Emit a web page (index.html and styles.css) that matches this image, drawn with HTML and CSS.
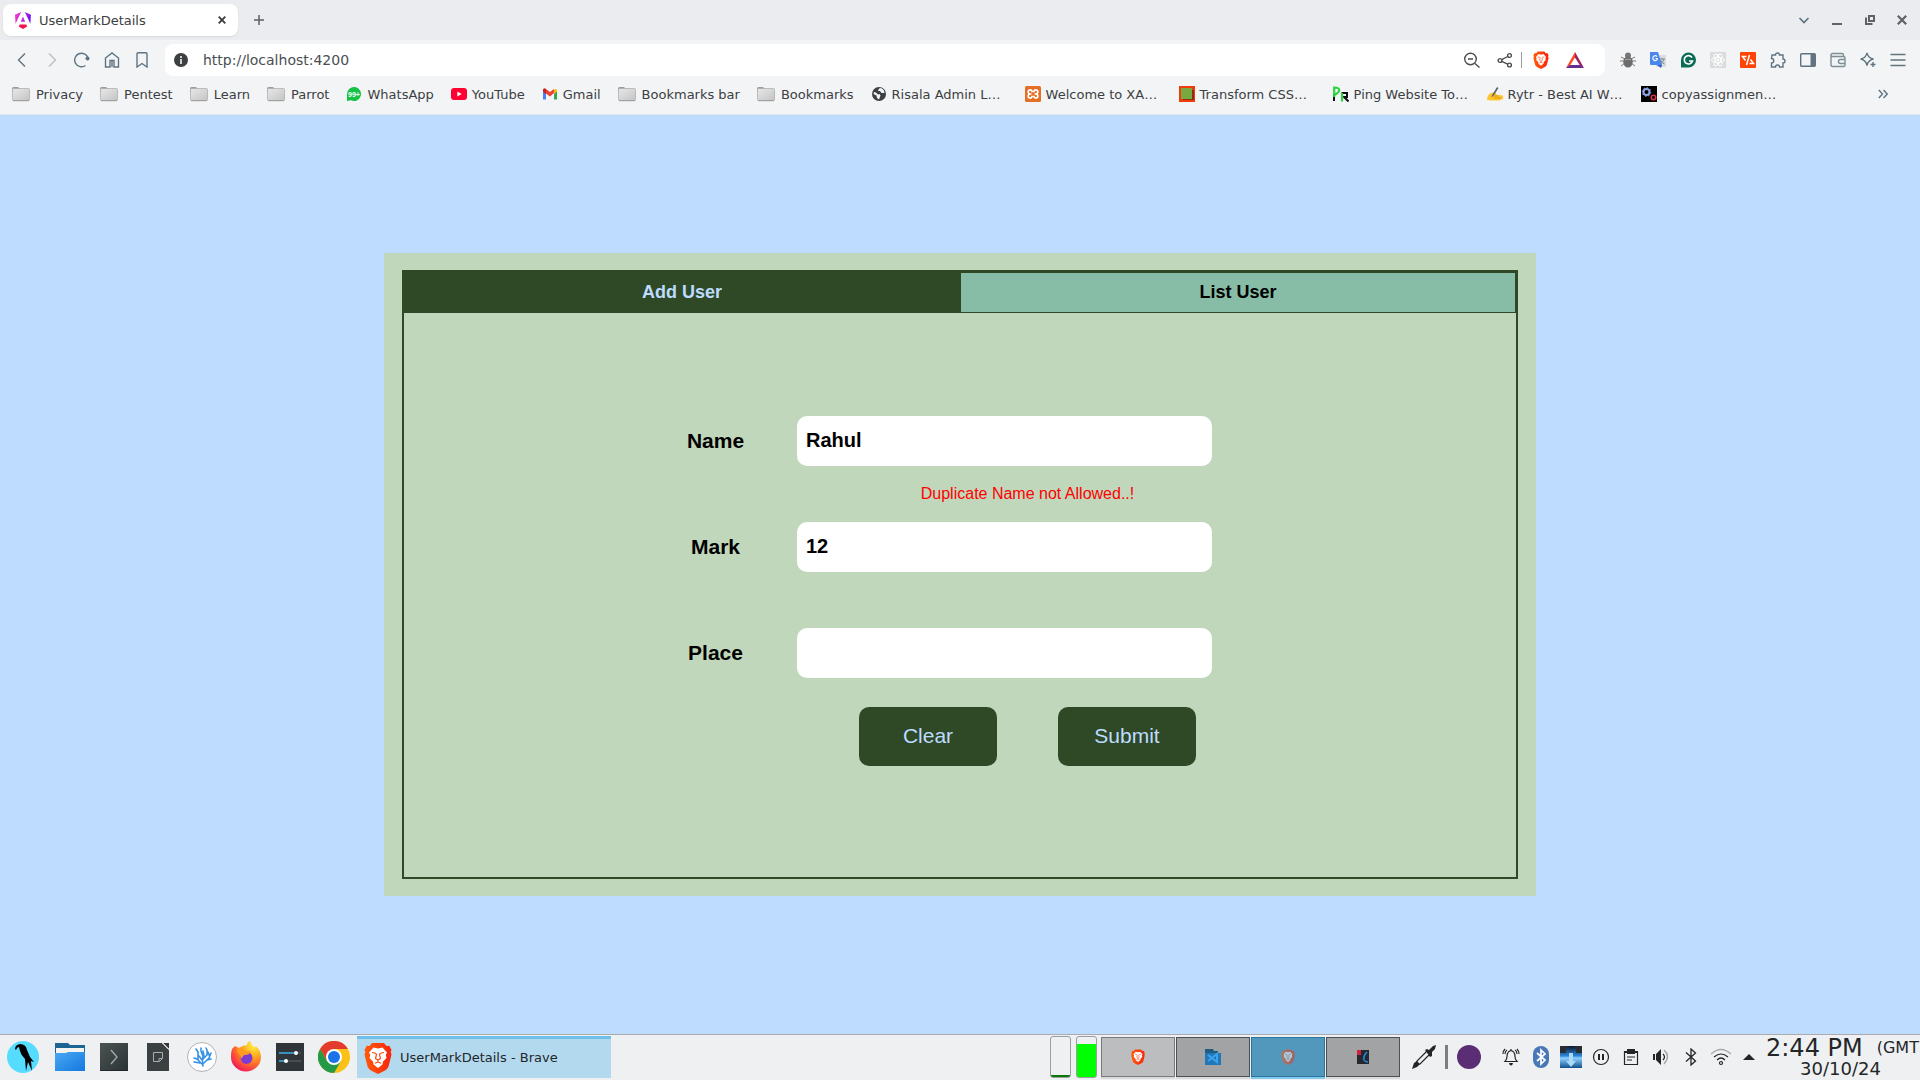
FILE: index.html
```html
<!DOCTYPE html>
<html lang="en">
<head>
<meta charset="utf-8">
<meta name="viewport" content="width=device-width, initial-scale=1">
<title>UserMarkDetails</title>
<link rel="stylesheet" href="styles.css">
</head>
<body>
<svg class="defs" aria-hidden="true">
  <defs>
    <linearGradient id="g-folder" x1="0" y1="0" x2="1" y2="1"><stop offset="0" stop-color="#e8e8e8"/><stop offset="1" stop-color="#c4c4c4"/></linearGradient>
    <linearGradient id="g-angular" x1="0" y1="0.2" x2="1" y2="0.4"><stop offset="0" stop-color="#f637c8"/><stop offset=".55" stop-color="#c822e8"/><stop offset="1" stop-color="#6c14f4"/></linearGradient>
    <linearGradient id="g-brave" x1="0" y1="0" x2="1" y2="0"><stop offset="0" stop-color="#ff5a0a"/><stop offset="1" stop-color="#f9240c"/></linearGradient>
    <linearGradient id="g-blue" x1="0" y1="0" x2="1" y2="1"><stop offset="0" stop-color="#4aa8f2"/><stop offset="1" stop-color="#1478e0"/></linearGradient>
    <linearGradient id="g-dark" x1="0" y1="0" x2="1" y2="1"><stop offset="0" stop-color="#4a5450"/><stop offset="1" stop-color="#2b3236"/></linearGradient>
    <radialGradient id="g-fox" cx=".75" cy=".15" r=".95"><stop offset="0" stop-color="#fff04a"/><stop offset=".35" stop-color="#ffb020"/><stop offset=".65" stop-color="#ff6a2c"/><stop offset="1" stop-color="#f0145e"/></radialGradient>
    <linearGradient id="g-sea" x1="0" y1="0" x2="0" y2="1"><stop offset="0" stop-color="#10182c"/><stop offset=".45" stop-color="#2a86dc"/><stop offset=".55" stop-color="#8fd0ff"/><stop offset="1" stop-color="#10508c"/></linearGradient>
    <symbol id="folder" viewBox="0 0 18 16"><path d="M0 6V2.500Q0 1 1.500 1H6l1.500 1.500V6z" fill="#9c9c9c"/><rect x=".5" y="2.500" width="17" height="12" rx="1" fill="url(#g-folder)" stroke="#a9a9a9" stroke-width=".7"/><path d="M1 14.700h16" stroke="#9a9a9a"/></symbol>
    <symbol id="brave" viewBox="0 0 28 32"><path d="M8 1h12l2.500 3 2.800-.3L27.500 8l-.8 2 .8 2.500-3 12Q23.500 27 21 28.500L14 32l-7-3.500Q4.500 27 3.500 24.500l-3-12L1.300 10 .5 8l2.200-4.300L5.500 4z" fill="url(#g-brave)"/><path d="M9.500 5.500 14 6.500l4.500-1 4.500 5-1.200 2.500.7 3-3.500 3.500-.5 3L14 26l-4.500-3.500-.5-3L5.500 16l.7-3L5 10.500z" fill="#fff"/><path d="M8 10.500l3.500.7 1 1.300-1 4 2.500 1.500 2.500-1.500-1-4 1-1.300 3.500-.7M14 18.500v1.500M11 21.300l3-1.300 3 1.300" fill="none" stroke="#fb4a14" stroke-width="1.200"/></symbol>
    <symbol id="bluetooth" viewBox="0 0 12 18"><path d="M1 4.500 10.500 13 6 17V1l4.500 4L1 13.500" fill="none" stroke="currentColor" stroke-width="1.300"/></symbol>
  </defs>
</svg>

<header class="browser">
  <div class="tabstrip">
    <div class="browser-tab">
      <svg width="16" height="17" viewBox="0 0 223 236" aria-hidden="true"><path fill="url(#g-angular)" d="m222 39-8 126L137 0zM8 165 0 39 85 0zM111 63l30 73H81z"/><path fill="#f4114e" d="m169 202-58 33-58-33 12-29h92z"/></svg>
      <span class="tab-title">UserMarkDetails</span>
      <button class="bare" aria-label="Close tab"><svg width="8" height="8" viewBox="0 0 8 8"><path d="M.7.7l6.600 6.600M7.300.7.700 7.300" stroke="#3c4043" stroke-width="1.900"/></svg></button>
    </div>
    <button class="bare new-tab" aria-label="New tab"><svg width="10" height="10" viewBox="0 0 10 10"><path d="M5 0v10M0 5h10" stroke="#5c6064" stroke-width="1.500"/></svg></button>
    <div class="window-buttons">
      <button class="bare" aria-label="Search tabs"><svg width="12" height="12" viewBox="0 0 12 12"><path d="m1.500 4 4.500 4.500L10.500 4" fill="none" stroke="#5f7480" stroke-width="1.700"/></svg></button>
      <button class="bare" aria-label="Minimize"><svg width="10" height="10" viewBox="0 0 10 10"><path d="M0 9h10" stroke="#5f6368" stroke-width="2"/></svg></button>
      <button class="bare" aria-label="Restore"><svg width="10" height="10" viewBox="0 0 10 10"><path d="M4 1h5v5H4zM1 2.500V9h6.500" fill="none" stroke="#5f6368" stroke-width="2"/></svg></button>
      <button class="bare" aria-label="Close"><svg width="10" height="10" viewBox="0 0 10 10"><path d="m.8.8 8.400 8.400M9.200.8.800 9.200" stroke="#5f6368" stroke-width="2.200"/></svg></button>
    </div>
  </div>

  <div class="toolbar">
    <nav class="tools" aria-label="Navigation">
      <button class="bare" aria-label="Back"><svg width="16" height="16" viewBox="0 0 16 16"><path d="M11 1.500 4.500 8l6.500 6.500" class="line"/></svg></button>
      <button class="bare faded" aria-label="Forward"><svg width="16" height="16" viewBox="0 0 16 16"><path d="M5 1.500 11.500 8 5 14.500" class="line"/></svg></button>
      <button class="bare" aria-label="Reload"><svg width="16" height="16" viewBox="0 0 16 16"><path d="M11.500 13.500A6.800 6.800 0 1 1 14 6" class="line"/><circle cx="13.500" cy="6.500" r="2" fill="#5f7480"/></svg></button>
      <button class="bare" aria-label="Home"><svg width="16" height="16" viewBox="0 0 16 16"><path d="M1.500 15V6L8 1l6.500 5v9H10V8.500H6V15zM8 9v6" class="line"/></svg></button>
      <button class="bare" aria-label="Bookmark"><svg width="16" height="16" viewBox="0 0 16 16"><path d="M3 15V2q0-1.300 1.300-1.300h7.400Q13 .7 13 2v13l-5-3.500z" class="line"/></svg></button>
    </nav>
    <div class="address">
      <svg width="14" height="14" viewBox="0 0 14 14" aria-hidden="true"><circle cx="7" cy="7" r="7" fill="#3c4043"/><path d="M7 3v2M7 6v5" stroke="#fff" stroke-width="1.500"/></svg>
      <input class="url" type="text" aria-label="Address" value="http://localhost:4200">
      <div class="address-tools">
        <button class="bare" aria-label="Zoom out"><svg width="16" height="16" viewBox="0 0 16 16"><circle cx="6.500" cy="7" r="5.800" class="ink"/><path d="M4 7h5M11 11.500l4.500 4" class="ink"/></svg></button>
        <button class="bare" aria-label="Share"><svg width="16" height="16" viewBox="0 0 16 16"><circle cx="3" cy="8.500" r="1.900" class="ink"/><circle cx="12.500" cy="3.500" r="1.900" class="ink"/><circle cx="12.500" cy="13" r="1.900" class="ink"/><path d="m4.700 7.700 6-3.200M4.700 9.400l6 2.800" class="ink"/></svg></button>
        <span class="divider"></span>
        <button class="bare" aria-label="Brave Shields"><svg width="16" height="18"><use href="#brave"/></svg></button>
        <button class="bare" aria-label="Rewards"><svg width="18" height="16" viewBox="0 0 18 16"><path d="M9 0 0 16l4-2.500 5-8z" fill="#ff4c24"/><path d="m9 0 9 16-4-2.500-5-8z" fill="#9e1f63"/><path d="M0 16h18l-4-3H4z" fill="#662d91"/></svg></button>
      </div>
    </div>
    <nav class="tools" aria-label="Extensions">
      <button class="bare" aria-label="Bug extension"><svg width="16" height="16" viewBox="0 0 16 16"><path d="m1 5 4 2M15 5l-4 2M0 9h16M1 14l4-3M15 14l-4-3" stroke="#777" /><circle cx="8" cy="3.500" r="3" fill="#777"/><ellipse cx="8" cy="10" rx="4.700" ry="5.500" fill="#6c6c6c"/><path d="M5 8q3-2 6 0" stroke="#aaa" fill="none"/></svg></button>
      <button class="bare" aria-label="Translate"><svg width="16" height="16" viewBox="0 0 16 16"><path d="M6 3h10v12H6z" fill="#dcdcdc"/><path d="M9 7h6M12 6v1M14 7q-1 4-4 5M10.500 8q1 3 4 4" stroke="#7c8a92" fill="none"/><path d="M0 0h8l4 13H1q-1 0-1-1z" fill="#4a86ee"/><path d="m7 13 4 3 1-3z" fill="#2c5ac8"/><path d="M7.500 6.500H5.500M7 4.500a2.400 2.400 0 1 0 .6 2" stroke="#fff" fill="none" stroke-width="1.200"/></svg></button>
      <button class="bare" aria-label="Grammar"><svg width="16" height="16" viewBox="0 0 16 16"><path d="M1 8a7.500 7.500 0 1 1 7.500 7.500H1z" fill="#0b6b57"/><path d="M12 5.500A4.200 4.200 0 1 0 12.500 9H9" fill="none" stroke="#fff" stroke-width="1.600"/></svg></button>
      <button class="bare" aria-label="React tools"><svg width="16" height="16" viewBox="0 0 16 16"><path fill="#dadbdc" d="M0 0h16v16H0z"/><g fill="none" stroke="#fff"><ellipse cx="8" cy="8" rx="6.500" ry="2.600"/><ellipse cx="8" cy="8" rx="6.500" ry="2.600" transform="rotate(60 8 8)"/><ellipse cx="8" cy="8" rx="6.500" ry="2.600" transform="rotate(120 8 8)"/></g><circle cx="8" cy="8" r="1.300" fill="#fff"/></svg></button>
      <button class="bare" aria-label="Code tools"><svg width="16" height="16" viewBox="0 0 16 16"><rect width="16" height="16" rx="1" fill="#ff4405"/><path d="M9.500 3 6.500 13M6.500 4.500H2.500l3 4M9.500 11.500h4l-3-4" fill="none" stroke="#fff" stroke-width="1.500"/></svg></button>
      <button class="bare" aria-label="Extensions"><svg width="16" height="16" viewBox="0 0 16 16"><path d="M2 3h3.500a2 2 0 1 1 4 0H13v4a2 2 0 1 1 0 4v4H9.500a2 2 0 0 0-4 0H1.500v-4a2 2 0 0 0 0-4.500z" class="line"/></svg></button>
      <button class="bare" aria-label="Sidebar"><svg width="16" height="16" viewBox="0 0 16 16"><rect x=".7" y="1.700" width="14.600" height="12.600" rx="1" class="line"/><path d="M10.500 2h4.500v12h-4.500z" fill="#5f7480"/></svg></button>
      <button class="bare" aria-label="Wallet"><svg width="16" height="16" viewBox="0 0 16 16"><path d="M1 3q0-1.500 1.500-1.500H12Q13.500 1.500 13.500 3v1.500M1 3q0 1.500 1.500 1.500h11Q15 4.500 15 6v7q0 1.500-1.500 1.500h-11Q1 14.500 1 13zM15 7.500h-4.500a2 2 0 0 0 0 4H15" class="line" opacity=".8"/></svg></button>
      <button class="bare" aria-label="Assistant"><svg width="16" height="16" viewBox="0 0 16 16"><path d="M7 .8q1 5 6.500 6.200Q8 8.300 7 13.500 6 8.300.7 7 6 5.800 7 .8zM13 10v5M10.500 12.500h5" class="line"/></svg></button>
      <button class="bare" aria-label="Menu"><svg width="16" height="16" viewBox="0 0 16 16"><path d="M.5 2.500h15M.5 8h15M.5 13.500h15" class="line"/></svg></button>
    </nav>
  </div>

  <nav class="bookmarks" aria-label="Bookmarks">
    <a href="#"><svg width="18" height="16"><use href="#folder"/></svg>Privacy</a>
    <a href="#"><svg width="18" height="16"><use href="#folder"/></svg>Pentest</a>
    <a href="#"><svg width="18" height="16"><use href="#folder"/></svg>Learn</a>
    <a href="#"><svg width="18" height="16"><use href="#folder"/></svg>Parrot</a>
    <a href="#" class="site"><svg width="16" height="16" viewBox="0 0 16 16"><path d="M1 15V8a7 7 0 1 1 4 6.300z" fill="#15c244"/><text x="8" y="10.500" text-anchor="middle" class="badge">99+</text></svg>WhatsApp</a>
    <a href="#" class="site"><svg width="16" height="16" viewBox="0 0 16 16"><rect y="2" width="16" height="12" rx="3" fill="#ff0033"/><path d="m6.300 5.500 4.400 2.500-4.400 2.500z" fill="#fff"/></svg>YouTube</a>
    <a href="#" class="site"><svg width="16" height="16" viewBox="0 0 16 16"><path d="M1 4v9.500h3V6z" fill="#4285f4"/><path d="M15 4v9.500h-3V6z" fill="#34a853"/><path d="M12 4v4l3-2.500V4q-1-2-3 0z" fill="#fbbc04"/><path d="M1 5.500V4q.8-2.300 3-1l4 3 4-3v4L8 10.500z" fill="#ea4335"/><path d="M1 4v1.500L4 8V3Q1.800 1.700 1 4z" fill="#c5221f"/></svg>Gmail</a>
    <a href="#"><svg width="18" height="16"><use href="#folder"/></svg>Bookmarks bar</a>
    <a href="#"><svg width="18" height="16"><use href="#folder"/></svg>Bookmarks</a>
    <a href="#" class="site long"><svg width="16" height="16" viewBox="0 0 16 16"><circle cx="8" cy="8" r="7" fill="#3c4043"/><path d="M3 6q2 0 3 1.500t2.500.5l1 1.500L8 13.500 6 12l-.5-2.500L2.500 8zM8 2.500 7 5h2l1.500 2 3 0q0-3.500-3.500-5z" fill="#f3f4f6"/></svg>Risala Admin L…</a>
    <a href="#" class="site long"><svg width="16" height="16" viewBox="0 0 16 16"><rect width="16" height="16" rx="1.500" fill="#e46f26"/><path d="M6.500 8H5.200a2 2 0 1 1 1.900-2.500h1.800A2 2 0 1 1 10.800 8a2 2 0 1 1-1.900 2.500H7.100A2 2 0 1 1 5.200 8M9.500 8h1.300" fill="none" stroke="#fff" stroke-width="1.700"/></svg>Welcome to XA…</a>
    <a href="#" class="site long"><svg width="16" height="16" viewBox="0 0 16 16"><path fill="#f03c08" d="M0 0h16v16H0z"/><path fill="#8c2c10" d="M4 4h11v10H4z"/><path fill="#78a840" d="M2 2h11v11H2z"/></svg>Transform CSS…</a>
    <a href="#" class="site long"><svg width="16" height="16" viewBox="0 0 16 16"><path d="M1 15V8M8.500 7H14v4h-3l4.500 4.500" stroke="#111" stroke-width="2" fill="none"/><path d="M1.200 11V1.500q5 0 5 2.500T1.500 9M9 15.500V7" stroke="#2bd43f" stroke-width="2.200" fill="none"/></svg>Ping Website To…</a>
    <a href="#" class="site long"><svg width="16" height="16" viewBox="0 0 16 16"><path d="M0 14q0-5 4-7l4-1 2 3 6 .5v3.500l-4 1.500H5z" fill="#ffc52e"/><path d="m4 11 6-10 1.500 1L6.500 10z" fill="#5b6670"/><path d="M6 10h6M7 12h7" stroke="#d89a10"/></svg>Rytr - Best AI W…</a>
    <a href="#" class="site long"><svg width="16" height="16" viewBox="0 0 16 16"><path d="M0 0h16v16H0z"/><circle cx="5.500" cy="6" r="3" fill="none" stroke="#8ea6e8" stroke-width="2"/><circle cx="5.500" cy="6" r="4.300" fill="none" stroke="#8ea6e8" stroke-dasharray="1.600 1.700"/><circle cx="12.500" cy="11.500" r="2.200" fill="none" stroke="#d8304a" stroke-width="1.600"/></svg>copyassignmen…</a>
    <button class="bare more" aria-label="More bookmarks"><svg width="10" height="10" viewBox="0 0 10 10"><path d="m.8 1 3.700 4L.8 9M5.500 1l3.700 4-3.700 4" class="line"/></svg></button>
  </nav>
</header>

<main class="page">
  <section class="panel">
    <div class="frame">
      <div class="tabs" role="tablist">
        <button class="tab active" role="tab" aria-selected="true">Add User</button>
        <button class="tab" role="tab" aria-selected="false">List User</button>
      </div>
      <div class="frame-body">
        <form class="user-form">
          <label for="name">Name</label>
          <input id="name" type="text" value="Rahul">
          <p class="error" role="alert">Duplicate Name not Allowed..!</p>
          <label for="mark">Mark</label>
          <input id="mark" type="text" value="12">
          <p class="error"></p>
          <label for="place">Place</label>
          <input id="place" type="text">
          <div class="actions">
            <button class="action" type="reset">Clear</button>
            <button class="action" type="button">Submit</button>
          </div>
        </form>
      </div>
    </div>
  </section>
</main>

<footer class="taskbar">
  <div class="launchers">
    <button class="bare" aria-label="Applications"><svg width="32" height="32" viewBox="0 0 32 32"><circle cx="16" cy="16" r="16" fill="#55dcff"/><path d="M8 8q0-4 5-5 6 0 7 6l3 7 4 5-3-1 1 10-4-9-2 9-1-12q-5-5-6-12-2 0-3 3z"/></svg></button>
    <button class="bare files" aria-label="Files"><svg width="30" height="28" viewBox="0 0 30 28"><path d="M0 0h13l2 2h15v12H0z" fill="#1c6494"/><path d="M1 5h28v8H1z" fill="#f4f3f0"/><path d="M0 10h11l2-1h17v19H0z" fill="url(#g-blue)"/></svg></button>
    <button class="bare" aria-label="Terminal"><svg width="28" height="28" viewBox="0 0 28 28"><path fill="url(#g-dark)" d="M0 0h28v28H0z"/><path d="m11 7 6 7-6 7" fill="none" stroke="#a8acab" stroke-width="1.300"/><path d="M0 27.500h28" stroke="#22272a"/></svg></button>
    <button class="bare" aria-label="Office"><svg width="22" height="28" viewBox="0 0 22 28"><path fill="#3b4043" d="M0 0h15l7 7v21H0z"/><path d="M16 0h6v6z" fill="#34383b"/><path d="m15.500 0 6.500 6.500" stroke="#fff"/><path d="M6.500 9.500h9v6l-3 3h-6zM15 15.500h-3V19" fill="none" stroke="#a9adaf"/></svg></button>
    <button class="bare" aria-label="Coral"><svg width="30" height="30" viewBox="0 0 30 30"><circle cx="15" cy="15" r="14.500" fill="#fff" stroke="#aeb3b6"/><g fill="none" stroke="#3591e6" stroke-width="1.600" stroke-linecap="round"><path d="M16 24q-1-6 0-10l-2-5V6M16 17l4-4V8l-1-2M17 21l5-5 2-5M20 18l4-1M15 22l-5-5-3-1M11 18V10L9 7M15 18l-3-4M13 21l-6-1M17 14l-1-5M22 13l-1-3"/></g></svg></button>
    <button class="bare" aria-label="Firefox"><svg width="30" height="31" viewBox="0 0 30 31"><path d="M1 8 4 5l4 2q4-3 8-3 0-3 3-4 1 4 5 6l1-1q5 5 5 11a15 14.500 0 0 1-30 0Q0 11 1 8z" fill="url(#g-fox)"/><circle cx="15.500" cy="17" r="6" fill="#7b3bd0"/><path d="M7 7q4-1 8 3l5 .5q-2 4-7 3.500l-3 4q0-5-4-7z" fill="#ff9a22"/></svg></button>
    <button class="bare" aria-label="Settings"><svg width="28" height="28" viewBox="0 0 28 28"><path fill="#30353a" d="M0 0h28v28H0z"/><path d="M20 10h5M10 18h15" stroke="#50565a" stroke-width="1.600"/><path d="M3 10h17M3 18h7" stroke="#3daee9" stroke-width="1.600"/><circle cx="20" cy="10" r="2" fill="#fff"/><circle cx="10" cy="18" r="2" fill="#fff"/></svg></button>
    <button class="bare" aria-label="Chrome"><svg width="32" height="32" viewBox="0 0 32 32"><circle cx="16" cy="16" r="16" fill="#fbc116"/><path d="M2.100 8A16 16 0 0 1 29.900 8H16L9 20z" fill="#e33b2e"/><path d="M2.100 8A16 16 0 0 0 16 32l7-12-7 4-7-4z" fill="#249a46"/><circle cx="16" cy="16" r="8" fill="#fff"/><circle cx="16" cy="16" r="6" fill="#1a73e8"/></svg></button>
  </div>
  <button class="task"><svg width="28" height="32"><use href="#brave"/></svg>UserMarkDetails - Brave</button>

  <div class="tray">
    <div class="meters"><span class="meter low"></span><span class="meter high"></span></div>
    <div class="pager">
      <button class="desk light" aria-label="Desktop 1"><svg width="14" height="16"><use href="#brave"/></svg></button>
      <button class="desk" aria-label="Desktop 2"><svg width="16" height="16" viewBox="0 0 16 16"><path d="M0 0h8l1 2h4v4H0z" fill="#1e5c86"/><path d="M0 4h16v12H0z" fill="#2277b8"/><path d="m3 6 9 7V5L3 12" fill="none" stroke="#3da4ea" stroke-width="2"/></svg></button>
      <button class="desk current" aria-label="Desktop 3"><svg class="dim" width="14" height="16"><use href="#brave"/></svg></button>
      <button class="desk" aria-label="Desktop 4"><svg width="14" height="14" viewBox="0 0 14 14"><path d="M1 0h12v14H1z" fill="#25282c"/><path d="M1 0h4v5H1z" fill="#d0203c"/><path d="M11 2q-4 4-3 8 1 2 4 2" fill="none" stroke="#2090e8" stroke-width="1.500"/></svg></button>
    </div>
    <button class="bare dropper" aria-label="Color picker"><svg width="24" height="24" viewBox="0 0 24 24"><path d="M15 6 5 16l-1 4 4-1L18 9" fill="none" stroke="#232629" stroke-width="1.200"/><path d="m0 24 2-6 3-2 3 3-3 3zM13 5l2-1 2 1 4-4 3-1-1 4-3 3 0 4-2 1z" fill="#232629"/></svg></button>
    <span class="tray-divider"></span>
    <button class="bare color-dot" aria-label="Picked color"></button>
    <div class="tray-icons">
      <button class="bare" aria-label="Notifications"><svg width="18" height="18" viewBox="0 0 18 18"><path d="M3 13.500q2-2 2-5 0-5 4-6 4 1 4 6 0 3 2 5zM9 1v2M3 1Q1 3 1 6M5 2Q3 3 3 6M15 1q2 2 2 5M13 2q2 1 2 4" class="trayline"/><path d="M7 15h4q-.5 2.500-2 2.500T7 15z" fill="#232629"/></svg></button>
      <button class="bare" aria-label="Bluetooth devices"><svg width="18" height="22" viewBox="0 0 18 22"><rect x="1" width="16" height="22" rx="8" fill="#4878b8"/><path d="m5 7 8 7-4 4V4l4 4-8 7" fill="none" stroke="#fff" stroke-width="1.700"/></svg></button>
      <button class="bare" aria-label="Downloads"><svg width="22" height="22" viewBox="0 0 22 22"><path fill="url(#g-sea)" d="M0 0h22v22H0z"/><path d="M0 0h8q-3 3-2 7H0zM14 0h8v7h-6q1-4-2-7z" fill="#292d32"/><path d="M9 7h4v8h3l-5 6-5-6h3z" fill="#a8daf6"/></svg></button>
      <button class="bare" aria-label="Paused"><svg width="18" height="18" viewBox="0 0 18 18"><circle cx="9" cy="9" r="7.500" class="trayline"/><path d="M7 6v6M11 6v6" stroke="#232629" stroke-width="2"/></svg></button>
      <button class="bare" aria-label="Clipboard"><svg width="18" height="18" viewBox="0 0 18 18"><path d="M2.500 3.500h13v13h-13zM5 9h8M5 12h5" class="trayline"/><path d="M5 1h8v5H5zM2 3h14v2H2z" fill="#232629"/></svg></button>
      <button class="bare" aria-label="Volume"><svg width="18" height="18" viewBox="0 0 18 18"><path d="M1 6h2v6H1zM4 6l5-5v16l-5-5z" fill="#232629"/><path d="M11 6q3 3 0 6" class="trayline"/><path d="M12 2q7 6 0 14" class="trayline" opacity=".4"/></svg></button>
      <button class="bare" aria-label="Bluetooth"><svg width="12" height="18"><use href="#bluetooth"/></svg></button>
      <button class="bare" aria-label="Wi-Fi"><svg width="22" height="18" viewBox="0 0 22 18"><path d="M1 6Q11-3 21 6" class="trayline" opacity=".35"/><path d="M4 9q7-6 14 0M7 12q4-4 8 0" class="trayline"/><circle cx="11" cy="15" r="1.500" class="trayline"/></svg></button>
    </div>
    <button class="bare expand" aria-label="Show hidden icons"><svg width="12" height="6" viewBox="0 0 12 6"><path d="m0 6 6-6 6 6z" fill="#232629"/></svg></button>
    <div class="clock">
      <div class="clock-top"><time class="time">2:44 PM</time><span class="zone">(GMT)</span></div>
      <time class="date">30/10/24</time>
    </div>
  </div>
</footer>
</body>
</html>
```
FILE: styles.css
```css
* {
  box-sizing: border-box;
}

body {
  margin: 0;
  height: 100vh;
  min-height: 720px;
  display: flex;
  flex-direction: column;
  overflow: hidden;
  background: #bddcff;
  font-family: "DejaVu Sans", sans-serif;
  font-size: 13px;
  color: #3c4043;
}

.defs {
  position: absolute;
  width: 0;
  height: 0;
}

svg {
  display: block;
  flex: none;
}

.bare {
  display: flex;
  align-items: center;
  justify-content: center;
  padding: 0;
  border: 0;
  background: none;
  color: inherit;
}

.line {
  fill: none;
  stroke: #5f7480;
  stroke-width: 1.4;
}

.ink {
  fill: none;
  stroke: #4a4e52;
  stroke-width: 1.4;
}

.trayline {
  fill: none;
  stroke: #232629;
  stroke-width: 1.2;
}

/* Browser window */

.browser {
  flex: none;
  background: #f3f4f6;
  border-bottom: 1px solid #e3e5e8;
}

.tabstrip {
  display: flex;
  align-items: center;
  height: 40px;
  padding: 0 13px 0 3px;
  background: #ebecf0;
}

.browser-tab {
  display: flex;
  align-items: center;
  width: 235px;
  height: 32px;
  padding: 0 12px;
  gap: 8px;
  border-radius: 8px;
  background: #fff;
  box-shadow: 0 1px 2px #d8dadd;
}

.tab-title {
  flex: 1;
}

.new-tab {
  margin-left: 16px;
}

.window-buttons {
  display: flex;
  gap: 2px;
  margin-left: auto;
}

.window-buttons .bare {
  width: 31px;
}

.window-buttons .bare:last-child {
  width: 10px;
  margin-left: 10px;
}

.toolbar {
  display: flex;
  align-items: center;
  height: 40px;
  padding: 0 7px;
  gap: 8px;
}

.tools {
  display: flex;
}

.tools .bare {
  width: 30px;
  height: 30px;
}

.faded {
  opacity: 0.4;
}

.address {
  flex: 1;
  display: flex;
  align-items: center;
  height: 32px;
  padding: 0 21px 0 9px;
  gap: 15px;
  border-radius: 8px;
  background: #fff;
}

.url {
  flex: 1;
  min-width: 0;
  padding: 0;
  border: 0;
  outline: 0;
  background: none;
  color: #4a4e52;
  font: 14px "DejaVu Sans", sans-serif;
}

.address-tools {
  display: flex;
  align-items: center;
  gap: 17px;
}

.divider {
  width: 1px;
  height: 16px;
  margin: 0 -6px 0 -9px;
  background: #9a9ea2;
}

.bookmarks {
  display: flex;
  align-items: center;
  height: 34px;
  padding: 0 32px 6px 12px;
  gap: 17px;
}

.bookmarks a {
  display: flex;
  align-items: center;
  gap: 6px;
  white-space: nowrap;
  color: inherit;
  text-decoration: none;
}

.bookmarks .site {
  gap: 5px;
}

.bookmarks .long {
  width: 137px;
}

.more {
  margin-left: auto;
}

.badge {
  font: bold 7px "Liberation Sans", Arial, sans-serif;
  fill: #fff;
}

/* Web page */

.page {
  flex: 1;
  min-height: 0;
  display: flex;
  align-items: center;
  justify-content: center;
  font-family: "Liberation Sans", Arial, sans-serif;
  color: #000;
}

.panel {
  display: flex;
  width: 60%;
  height: 70%;
  min-height: 500px;
  padding: 17px 18px;
  background: #c0d7bb;
}

.frame {
  flex: 1;
  display: flex;
  flex-direction: column;
  border: 2px solid #2f4926;
}

.tabs {
  display: grid;
  grid-template-columns: 1fr 1fr;
}

.tab {
  height: 41px;
  padding: 0;
  border: 1px solid #2f4926;
  background: #87bca6;
  color: #000;
  font: bold 18px "Liberation Sans", Arial, sans-serif;
}

.tab.active {
  background: #2f4926;
  color: #bddcff;
}

.frame-body {
  flex: 1;
  display: flex;
  align-items: center;
  justify-content: center;
  padding: 0 28px 8px 0;
}

.user-form {
  display: grid;
  grid-template-columns: 163px 461px;
  grid-template-rows: 50px 56px 50px 56px 50px;
  align-items: center;
}

.user-form label {
  text-align: center;
  font-size: 21px;
  font-weight: bold;
}

.user-form input {
  width: 415px;
  height: 50px;
  padding: 0 9px;
  border: 0;
  border-radius: 10px;
  background: #fff;
  color: #000;
  font: bold 20px "Liberation Sans", Arial, sans-serif;
}

.error {
  grid-column: 2;
  margin: 0;
  text-align: center;
  font-size: 16px;
  color: #f00;
}

.actions {
  grid-column: 2;
  display: flex;
  justify-content: center;
  gap: 61px;
  padding-top: 29px;
}

.action {
  width: 138px;
  height: 59px;
  padding: 0;
  border: 0;
  border-radius: 10px;
  background: #2f4926;
  color: #bddcff;
  font: 21px "Liberation Sans", Arial, sans-serif;
}

/* Desktop taskbar */

.taskbar {
  flex: none;
  display: flex;
  align-items: center;
  height: 46px;
  padding-bottom: 2px;
  border-top: 1px solid #a9acaf;
  background: #eff0f1;
  color: #232629;
}

.launchers {
  display: flex;
  padding: 0 1px;
}

.launchers .bare {
  width: 44px;
}

.launchers .files {
  width: 50px;
  margin-right: -3px;
}

.task {
  display: flex;
  align-items: center;
  width: 254px;
  height: 42px;
  padding: 0 7px 1px;
  gap: 8px;
  border: 0;
  border-top: 3px solid #6fc1ec;
  background: #b3d9ee;
  color: #232629;
  font: 13px "DejaVu Sans", sans-serif;
}

.tray {
  display: flex;
  align-items: center;
  margin-left: auto;
}

.meters {
  display: flex;
  gap: 5px;
  margin-right: 4px;
}

.meter {
  width: 21px;
  height: 42px;
  border: 1px solid #9b9ea0;
  border-radius: 3px;
}

.low {
  background: linear-gradient(#eff0f1 38px, #087808 38px);
}

.high {
  background: linear-gradient(#eff0f1 7px, #00ff00 7px);
}

.pager {
  display: flex;
  gap: 1px;
}

.desk {
  display: flex;
  align-items: center;
  justify-content: center;
  width: 74px;
  height: 40px;
  padding: 0;
  border: 1px solid #4d5053;
  background: #a2a3a5;
  box-shadow: 0 2px 0 #d9dadc;
}

.light {
  border-color: #77797b;
  background: #bcbdbf;
}

.current {
  border-color: #2a769c;
  background: #5198bc;
  box-shadow: 0 2px 0 #84c8ee;
}

.dim {
  opacity: 0.5;
}

.dropper {
  margin-left: 12px;
}

.tray-divider {
  width: 3px;
  height: 24px;
  margin: 0 9px;
  background: #7c7e80;
}

.color-dot {
  width: 24px;
  height: 24px;
  border-radius: 50%;
  background: #5a2d74;
}

.tray-icons {
  display: flex;
  margin-left: 15px;
}

.tray-icons .bare {
  width: 30px;
}

.expand {
  margin-left: 7px;
}

.clock {
  width: 159px;
  margin-left: 6px;
  text-align: center;
  white-space: nowrap;
}

.clock-top {
  display: flex;
  align-items: center;
  padding-left: 5px;
  gap: 14px;
}

.time {
  font-size: 24px;
  line-height: 24px;
}

.zone {
  font-size: 16px;
  line-height: 24px;
}

.date {
  display: block;
  font-size: 18px;
  line-height: 18px;
}
```
